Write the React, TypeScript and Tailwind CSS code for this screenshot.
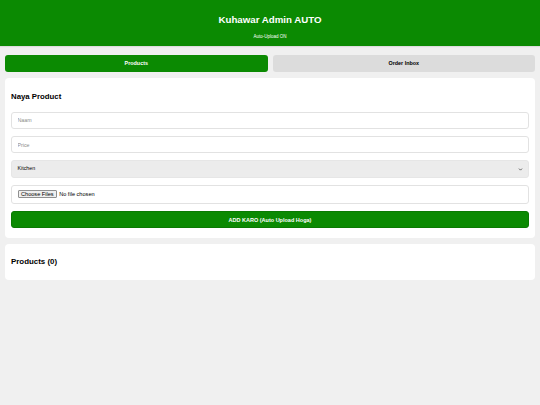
import { ChevronDown } from "lucide-react";

const font = "font-['Liberation_Sans',Arial,sans-serif]";

const Field = ({ placeholder }: { placeholder: string }) => (
    <input
        placeholder={placeholder}
        className="w-full h-[17.5px] px-[5.5px] border border-[#e2e2e2] rounded-[3px] bg-white text-[5.3px] text-black placeholder:text-[#8a8a8a] outline-none"
    />
);

export default function App() {
    return (
        <div className={`${font} min-h-[405px] bg-[#f0f0f0] text-black`}>
            {/* Header */}
            <div className="h-[46px] bg-[#0b8a02] flex flex-col items-center text-white shadow-[0_1px_1px_rgba(0,0,0,0.08)]">
                <h1 className="mt-[14px] text-[9.7px] leading-[12px] font-bold">Kuhawar Admin AUTO</h1>
                <p className="mt-[8px] text-[4.5px] leading-[6px]">Auto-Upload ON</p>
            </div>

            {/* Tabs */}
            <div className="flex gap-[5px] px-[5px] mt-[9px]">
                <button className="flex-1 h-[17px] rounded-[3px] bg-[#0b8a02] text-white text-[5.4px] font-bold">
                    Products
                </button>
                <button className="flex-1 h-[17px] rounded-[3px] bg-[#dcdcdc] text-black text-[5.4px] font-bold">
                    Order Inbox
                </button>
            </div>

            {/* Naya product form */}
            <div className="mx-[5px] mt-[5.5px] bg-white rounded-[4px] p-[6px]">
                <h3 className="mt-[8px] mb-[11.2px] h-[9px] text-[7.8px] leading-[9px] font-bold">Naya Product</h3>
                <div className="flex flex-col gap-[6.8px] mb-[3.3px]">
                    <Field placeholder="Naam" />
                    <Field placeholder="Price" />
                    <div className="h-[17.5px] px-[5.5px] rounded-[3px] bg-[#ececec] border border-[#e6e6e6] flex items-center justify-between text-[5.3px]">
                        <span>Kitchen</span>
                        <ChevronDown size={5} strokeWidth={3.5} className="text-[#333]" />
                    </div>
                    <div className="h-[19.5px] px-[5.5px] border border-[#e2e2e2] rounded-[3px] flex items-center gap-[2px] text-[5.6px]">
                        <span className="px-[2.5px] h-[8px] leading-[7px] border border-[#8f8f8f] rounded-[1px] bg-[#efefef]">Choose Files</span>
                        <span>No file chosen</span>
                    </div>
                    <button className="h-[17.5px] rounded-[3px] bg-[#0b8a02] border border-[#0a7a02] text-white text-[5.5px] font-bold">
                        ADD KARO (Auto Upload Hoga)
                    </button>
                </div>
            </div>

            {/* Products list */}
            <div className="mx-[5px] mt-[6px] bg-white rounded-[4px] p-[6px]">
                <h3 className="my-[7.8px] h-[9px] text-[7.9px] leading-[9px] font-bold">Products (0)</h3>
            </div>
        </div>
    );
}
